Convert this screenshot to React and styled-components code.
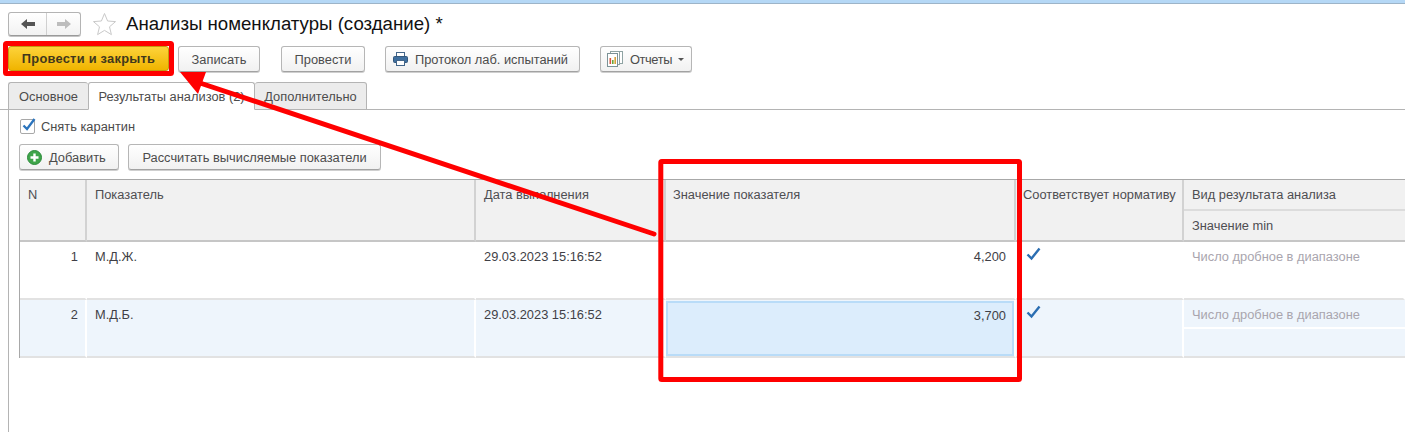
import React from "react";
import styled, { createGlobalStyle } from "styled-components";

const Global = createGlobalStyle`
  html, body { margin: 0; padding: 0; background: #fff; }
  body { font-family: "Liberation Sans", Arial, sans-serif; font-size: 12.85px; color: #4b4b4b; }
`;

const Page = styled.div`
  position: relative;
  width: 1405px;
  height: 432px;
  overflow: hidden;
  background: #fff;
`;
const TopStrip = styled.div`
  height: 3px;
  background: #b5d8f6;
  border-bottom: 1px solid #9db4c8;
`;
const TitleRow = styled.div`
  display: flex;
  align-items: center;
  height: 24px;
  margin: 8px 0 0 8px;
`;
const NavGroup = styled.div`
  display: flex;
  width: 73px;
  height: 24px;
  box-sizing: border-box;
  border: 1px solid #b4b4b4;
  border-bottom-color: #9a9a9a;
  border-radius: 3px;
  background: linear-gradient(#fff, #f2f2f2);
  box-shadow: 0 1px 0 #c4c4c4;
`;
const NavCell = styled.div`
  flex: ${(p) => (p.$first ? "0 0 37px" : "1")};
  display: flex;
  align-items: center;
  justify-content: center;
  border-right: ${(p) => (p.$first ? "1px solid #d0d0d0" : "none")};
`;
const StarBox = styled.div`
  display: flex;
  margin-left: 11px;
  width: 25px;
  height: 24px;
`;
const Title = styled.div`
  margin-left: 9px;
  font-size: 18.65px;
  color: #111;
  white-space: nowrap;
`;
const Toolbar = styled.div`
  display: flex;
  align-items: flex-start;
  height: 26px;
  margin: 10px 0 0 8px;
`;
const Button = styled.div`
  box-sizing: border-box;
  display: flex;
  align-items: center;
  justify-content: ${(p) => (p.$pl ? "flex-start" : "center")};
  gap: ${(p) => p.$gap || 0}px;
  width: ${(p) => p.$w}px;
  height: 26px;
  margin-left: ${(p) => p.$ml || 0}px;
  padding-left: ${(p) => p.$pl || 0}px;
  border: 1px solid #b6b6b6;
  border-bottom-color: #a2a2a2;
  border-radius: 3px;
  background: linear-gradient(#fff, #f1f1f1);
  box-shadow: 0 1px 0 #cfcfcf;
  color: #4c4c4c;
  white-space: nowrap;
`;
const PrimaryButton = styled(Button)`
  height: 25px;
  border-color: #c49a10;
  background: linear-gradient(#fdd33a, #f0b400);
  box-shadow: none;
  color: #41381c;
  font-weight: bold;
  letter-spacing: 0.25px;
`;
const ReportLabel = styled.span`
  letter-spacing: -0.4px;
`;
const Caret = styled.span`
  width: 0;
  height: 0;
  margin-left: -1px;
  border-left: 3px solid transparent;
  border-right: 3px solid transparent;
  border-top: 3px solid #555;
`;
const TabBar = styled.div`
  display: flex;
  align-items: flex-end;
  height: 28px;
  margin-top: 10px;
  padding-left: 8px;
  border-bottom: 1px solid #b4b4b4;
  box-sizing: border-box;
`;
const Tab = styled.div`
  box-sizing: border-box;
  display: flex;
  align-items: center;
  justify-content: center;
  width: ${(p) => p.$w}px;
  height: 28px;
  margin-bottom: -1px;
  border: 1px solid #b4b4b4;
  border-left-width: ${(p) => (p.$noLeft ? 0 : 1)}px;
  border-right-width: ${(p) => (p.$noRight ? 0 : 1)}px;
  border-bottom: ${(p) => (p.$active ? "1px solid #fff" : "1px solid #b4b4b4")};
  border-radius: 3px 3px 0 0;
  background: ${(p) => (p.$active ? "#fff" : "#ececec")};
  color: #4c4c4c;
  white-space: nowrap;
`;
const Panel = styled.div`
  margin-left: 8px;
  border-left: 1px solid #b4b4b4;
  padding: 9px 0 0 10px;
  height: 330px;
`;
const CheckRow = styled.label`
  display: flex;
  align-items: center;
  gap: 6px;
  height: 15px;
  margin-left: 1px;
`;
const CheckBox = styled.span`
  box-sizing: border-box;
  display: block;
  position: relative;
  width: 15px;
  height: 15px;
  border: 1px solid #a8a8a8;
  border-radius: 2px;
  background: #fff;
`;
const CheckMark = styled.svg`
  position: absolute;
  left: 0;
  top: -3px;
`;
const ActionRow = styled.div`
  display: flex;
  margin-top: 10px;
  height: 26px;
`;
const Table = styled.div`
  display: grid;
  grid-template-columns: 67px 389px 190px 350px 168px 1fr;
  margin-top: 9px;
  width: 1386px;
  border-top: 1px solid #a8a8a8;
  border-left: 1px solid #a8a8a8;
  box-sizing: border-box;
`;
const HeadCell = styled.div`
  box-sizing: border-box;
  height: 62px;
  padding: 7px 0 0 ${(p) => p.$pad ?? 8}px;
  background: #f1f1f1;
  border-right: 2px solid #d2d2d2;
  border-bottom: 2px solid #c6c6c6;
  color: #4e4e52;
  white-space: nowrap;
`;
const HeadSplit = styled.div`
  display: grid;
  grid-template-rows: 31px 1fr;
  height: 62px;
  box-sizing: border-box;
  background: #f1f1f1;
  border-bottom: 2px solid #c6c6c6;
  color: #4e4e52;
  white-space: nowrap;
`;
const HeadLine = styled.div`
  padding: 7px 0 0 8px;
  border-bottom: ${(p) => (p.$rule ? "2px solid #dcdcdc" : "none")};
`;
const Cell = styled.div`
  box-sizing: border-box;
  height: 58px;
  padding: ${(p) => p.$top ?? 7}px ${(p) => (p.$right ? `${p.$right}px` : "0")} 0 ${(p) => p.$pad ?? 8}px;
  text-align: ${(p) => (p.$right ? "right" : "left")};
  background: ${(p) => (p.$sel ? "#eef5fc" : "#fff")};
  border-right: 2px solid #fff;
  border-bottom: 2px solid #e2e2e2;
  color: ${(p) => (p.$muted ? "#a9a5ae" : "#3f3f46")};
  white-space: nowrap;
`;
const ActiveCell = styled.div`
  box-sizing: border-box;
  height: 58px;
  background: #eef5fc;
  border-right: 2px solid #fff;
  border-bottom: 2px solid #e2e2e2;
`;
const ActiveInner = styled.div`
  box-sizing: border-box;
  height: 55px;
  margin-top: 1px;
  padding: 5px 6px 0 0;
  text-align: right;
  background: #dcedfc;
  border: 2px solid #b9dcf8;
  color: #3f3f46;
`;
const SplitCell = styled.div`
  box-sizing: border-box;
  height: 58px;
  display: grid;
  grid-template-rows: 29px 1fr;
  background: #eef5fc;
  border-bottom: 2px solid #e2e2e2;
  color: #a9a5ae;
  white-space: nowrap;
`;
const SplitLine = styled.div`
  padding: 7px 0 0 8px;
  border-bottom: ${(p) => (p.$rule ? "2px solid #fff" : "none")};
`;
const Overlay = styled.svg`
  position: absolute;
  left: 0;
  top: 0;
  pointer-events: none;
`;

const Check = () => (
  <svg width="15" height="14" viewBox="0 0 15 14">
    <path d="M1.5 7.5 L5.5 11.5 L13.5 1.5" fill="none" stroke="#2b6eb2" strokeWidth="2.4" />
  </svg>
);

export default function App() {
  return (
    <Page>
      <Global />
      <TopStrip />
      <TitleRow>
        <NavGroup>
          <NavCell $first>
            <svg width="16" height="12" viewBox="0 0 16 12">
              <path d="M1 6 L7 1 V4 H15 V8 H7 V11 Z" fill="#555" />
            </svg>
          </NavCell>
          <NavCell>
            <svg width="16" height="12" viewBox="0 0 16 12">
              <path d="M15 6 L9 1 V4 H1 V8 H9 V11 Z" fill="#bdbdbd" />
            </svg>
          </NavCell>
        </NavGroup>
        <StarBox>
          <svg width="25" height="24" viewBox="0 0 25 24">
            <path d="M12.5 1.5 L15.6 9 L23.5 9.6 L17.5 14.8 L19.4 22.6 L12.5 18.4 L5.6 22.6 L7.5 14.8 L1.5 9.6 L9.4 9 Z" fill="#fff" stroke="#c9c9c9" strokeWidth="1" />
          </svg>
        </StarBox>
        <Title>Анализы номенклатуры (создание) *</Title>
      </TitleRow>
      <Toolbar>
        <PrimaryButton $w={161}>Провести и закрыть</PrimaryButton>
        <Button $w={82} $ml={9}>Записать</Button>
        <Button $w={84} $ml={21}>Провести</Button>
        <Button $w={195} $ml={20} $pl={7} $gap={7}>
          <svg width="15" height="14" viewBox="0 0 15 14">
            <rect x="3.5" y="0.5" width="8" height="5" fill="#fff" stroke="#44668a" />
            <rect x="0.5" y="4.5" width="14" height="6" rx="1" fill="#3f6f9f" stroke="#34587c" />
            <rect x="3.5" y="8.5" width="8" height="5" fill="#fff" stroke="#44668a" />
          </svg>
          Протокол лаб. испытаний
        </Button>
        <Button $w={92} $ml={20} $pl={6} $gap={7}>
          <svg width="16" height="16" viewBox="0 0 16 16">
            <rect x="6.5" y="0.5" width="9" height="12" fill="#fff" stroke="#8fa3a3" />
            <rect x="3.5" y="0.5" width="9" height="13" fill="#fff" stroke="#8fa3a3" />
            <rect x="0.5" y="2.5" width="10" height="13" fill="#fff" stroke="#7c9296" />
            <rect x="2.5" y="7" width="1.6" height="6" fill="#d8563c" />
            <rect x="5" y="9" width="1.6" height="4" fill="#6aa83a" />
            <rect x="7.4" y="6" width="1.6" height="7" fill="#d8a23c" />
          </svg>
          <ReportLabel>Отчеты</ReportLabel>
          <Caret />
        </Button>
      </Toolbar>
      <TabBar>
        <Tab $w={80} $noRight>Основное</Tab>
        <Tab $w={167} $active>Результаты анализов (2)</Tab>
        <Tab $w={112} $noLeft>Дополнительно</Tab>
      </TabBar>
      <Panel>
        <CheckRow>
          <CheckBox>
            <CheckMark width="16" height="16" viewBox="0 0 16 16">
              <path d="M2.5 8.5 L6 12 L13.5 2" fill="none" stroke="#2b74bd" strokeWidth="2.3" />
            </CheckMark>
          </CheckBox>
          Снять карантин
        </CheckRow>
        <ActionRow>
          <Button $w={100} $pl={7} $gap={7}>
            <svg width="15" height="15" viewBox="0 0 15 15">
              <circle cx="7.5" cy="7.5" r="7" fill="#3fa54a" stroke="#2b8a3a" />
              <path d="M7.5 3.5 V11.5 M3.5 7.5 H11.5" stroke="#fff" strokeWidth="2.4" />
            </svg>
            Добавить
          </Button>
          <Button $w={253} $ml={9}>Рассчитать вычисляемые показатели</Button>
        </ActionRow>
        <Table>
          <HeadCell $pad={8}>N</HeadCell>
          <HeadCell>Показатель</HeadCell>
          <HeadCell>Дата выполнения</HeadCell>
          <HeadCell $pad={7}>Значение показателя</HeadCell>
          <HeadCell $pad={7}>Соответствует нормативу</HeadCell>
          <HeadSplit>
            <HeadLine $rule>Вид результата анализа</HeadLine>
            <HeadLine>Значение min</HeadLine>
          </HeadSplit>

          <Cell $right={7}>1</Cell>
          <Cell>М.Д.Ж.</Cell>
          <Cell>29.03.2023 15:16:52</Cell>
          <Cell $right={8}>4,200</Cell>
          <Cell $pad={10} $top={5}><Check /></Cell>
          <Cell $muted>Число дробное в диапазоне</Cell>

          <Cell $right={7} $sel>2</Cell>
          <Cell $sel>М.Д.Б.</Cell>
          <Cell $sel>29.03.2023 15:16:52</Cell>
          <ActiveCell><ActiveInner>3,700</ActiveInner></ActiveCell>
          <Cell $pad={10} $top={5} $sel><Check /></Cell>
          <SplitCell>
            <SplitLine $rule>Число дробное в диапазоне</SplitLine>
            <SplitLine />
          </SplitCell>
        </Table>
      </Panel>
      <Overlay width="1405" height="432" viewBox="0 0 1405 432">
        <rect x="5.5" y="43.5" width="166" height="30" rx="1" fill="none" stroke="#ff0000" strokeWidth="5" />
        <rect x="660.8" y="161.5" width="358.7" height="218" rx="1" fill="none" stroke="#ff0000" strokeWidth="5" strokeLinejoin="round" />
        <path d="M654 234 L200 83" stroke="#ff0000" strokeWidth="5" strokeLinecap="round" />
        <path d="M180 72 L206 72 L198 94 Z" fill="#ff0000" />
      </Overlay>
    </Page>
  );
}
